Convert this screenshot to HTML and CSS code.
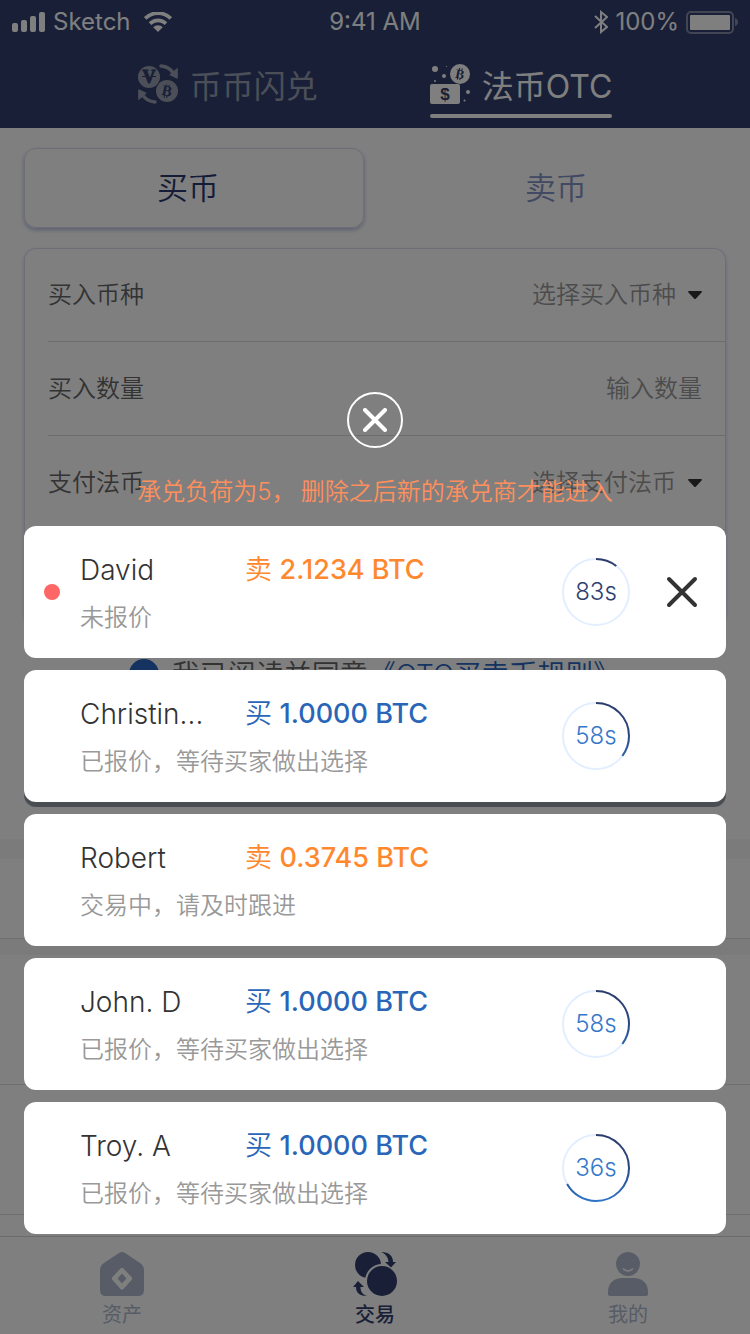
FILE: index.html
```html
<!DOCTYPE html>
<html lang="zh-CN">
<head>
<meta charset="utf-8">
<meta name="viewport" content="width=device-width, initial-scale=1">
<title>法币OTC</title>
<link rel="stylesheet" href="styles.css">
</head>
<body>
<div class="page">
  <header class="header">
    <div class="status">
      <div class="status-side">
        <svg width="34" height="20" viewBox="0 0 34 20" fill="currentColor" aria-hidden="true"><rect y="11" width="6" height="9" rx="2"/><rect x="9" y="8" width="6" height="12" rx="2"/><rect x="18" y="4" width="6" height="16" rx="2"/><rect x="27" width="6" height="20" rx="2"/></svg>
        <span>Sketch</span>
        <svg class="wifi" width="28" height="20" viewBox="0 0 28 20" aria-hidden="true"><g fill="none" stroke="currentColor" stroke-width="3.800"><path d="M1.200 6.500a18 18 0 0 1 25.600 0"/><path d="M6 11.600a11.400 11.400 0 0 1 16 0"/></g><path d="M9.200 15.200a6.600 6.600 0 0 1 9.600 0L14 20z" fill="currentColor"/></svg>
      </div>
      <span>9:41 AM</span>
      <div class="status-side status-end">
        <svg width="14" height="24" viewBox="0 0 14 24" fill="none" stroke="currentColor" stroke-width="2" aria-hidden="true"><path d="M1 6l12 11-6 5V2l6 5L1 18"/></svg>
        <span>100%</span>
        <svg width="48" height="23" viewBox="0 0 48 23" aria-hidden="true"><rect x="1" y="1" width="46" height="21" rx="4" fill="none" stroke="currentColor" stroke-width="2" opacity=".4"/><rect x="4" y="4" width="40" height="15" rx="1" fill="currentColor"/></svg>
        <svg class="nub" width="3" height="8" viewBox="0 0 3 8" aria-hidden="true"><path d="M0 0q3 1 3 4t-3 4z" fill="currentColor" opacity=".4"/></svg>
      </div>
    </div>
    <nav class="modes">
      <button class="mode" type="button">
        <svg width="40" height="40" viewBox="0 0 40 40" aria-hidden="true">
          <g fill="currentColor"><circle cx="11" cy="13" r="11"/><circle cx="29" cy="27" r="11"/></g>
          <g fill="none" stroke="currentColor" stroke-width="3.500" stroke-linecap="round"><path d="M23 2q9 .500 13.500 9"/><path d="M17 38q-9-.500-13.500-9"/></g>
          <g fill="currentColor" stroke="currentColor" stroke-linejoin="round"><path d="M39.300 4.500v9.800l-7.500-3.500z"/><path d="M.700 35.500v-9.800l7.500 3.500z"/></g>
          <g class="coin-mark"><text class="vee" x="11" y="19" font-size="18">V</text><path d="M4 12.500h5M13 12.500h5"/><g transform="rotate(12 29 27)"><text x="29" y="32" font-size="15">B</text><path d="M27.500 20.500v2.500M30 20.500v2.500M27.500 31.500v2.500M30 31.500v2.500"/></g></g>
        </svg>
        <span>币币闪兑</span>
      </button>
      <button class="mode mode-on" type="button" aria-current="page">
        <svg width="40" height="40" viewBox="0 0 40 40" aria-hidden="true">
          <g fill="currentColor"><rect y="20" width="30" height="20" rx="2"/><circle cx="30" cy="10" r="10"/><circle cx="5" cy="5" r="3"/><circle cx="14" cy="12" r="2"/><circle cx="5" cy="17" r="1"/><circle cx="16.500" cy="2.500" r=".600"/><circle cx="38" cy="28" r="2"/><circle cx="34.500" cy="36.500" r="1"/></g>
          <g class="coin-mark"><g transform="rotate(12 30 10)"><text x="30" y="14.500" font-size="13">B</text><path d="M28.500 4v2M31 4v2M28.500 14v2M31 14v2"/></g><text class="dollar" x="15" y="36" font-size="17">$</text></g>
        </svg>
        <span>法币<span class="latin">OTC</span></span>
      </button>
    </nav>
  </header>

  <main class="main">
    <form class="trade">
      <div class="sides">
        <button class="side side-on" type="button">买币</button>
        <button class="side" type="button">卖币</button>
      </div>
      <div class="fields">
        <div class="field">
          <label for="coin">买入币种</label>
          <div class="pick"><select id="coin"><option>选择买入币种</option></select><svg width="14" height="8" viewBox="0 0 14 8" aria-hidden="true"><path d="M0 1q0-1 1-1h12q1 0 1 1L8 7.500q-1 1-2 0z"/></svg></div>
        </div>
        <div class="field">
          <label for="amount">买入数量</label>
          <input id="amount" type="text" placeholder="输入数量">
        </div>
        <div class="field">
          <label for="fiat">支付法币</label>
          <div class="pick"><select id="fiat"><option>选择支付法币</option></select><svg width="14" height="8" viewBox="0 0 14 8" aria-hidden="true"><path d="M0 1q0-1 1-1h12q1 0 1 1L8 7.500q-1 1-2 0z"/></svg></div>
        </div>
        <div class="field"></div>
      </div>
      <div class="agree">
        <input class="tick" id="agree" type="checkbox" checked>
        <p><label for="agree">我已阅读并同意</label><a href="#rules">《<span class="latin">OTC</span>买卖币规则》</a></p>
      </div>
      <div class="submit"></div>
    </form>
    <div class="strip"></div>
    <div class="panel-head"></div>
    <div class="strip strip-low"></div>
    <div class="order"></div>
    <div class="order"></div>
  </main>

  <nav class="tabbar">
    <a class="tab" href="#assets">
      <svg width="44" height="44" viewBox="0 0 44 44" aria-hidden="true"><path fill="currentColor" d="M19 1q3-2 6 0l15 10q4 3 4 7v20q0 6-6 6H6q-6 0-6-6V18q0-4 4-7z"/><path fill="#fff" d="M20.500 16.500q1.500-1.500 3 0l8 8.500q1.500 1.500 0 3l-8 9q-1.500 1.500-3 0l-8-9q-1.500-1.500 0-3z"/><path fill="currentColor" d="M22 21.500l4.500 5L22 31.500l-4.500-5z"/></svg>
      <span>资产</span>
    </a>
    <a class="tab tab-on" href="#trade" aria-current="page">
      <svg width="44" height="44" viewBox="0 0 44 44" aria-hidden="true"><g fill="currentColor"><circle cx="15" cy="13" r="13"/><circle cx="29" cy="29" r="16" stroke="#fff" stroke-width="2"/><path d="M28 0c8 0 12 4 12 10h3l-5 5.500-6-5.500h3.500c-.500-5-2.500-8-7.500-10z"/><path d="M14 44C7 44 3 41 3 35H0l5-6 6 6H7.500c0 4 1.500 7.500 6.500 9z"/></g></svg>
      <span>交易</span>
    </a>
    <a class="tab" href="#me">
      <svg width="40" height="44" viewBox="0 0 40 44" aria-hidden="true"><g fill="currentColor"><circle cx="20" cy="12" r="12"/><path d="M0 42v-2c0-9 6-14 14-14h12c8 0 14 5 14 14v2q0 2-2 2H2q-2 0-2-2z"/></g><path d="M15.500 17q4.500 4 9 0" fill="none" stroke="#fff" stroke-width="1.600" stroke-linecap="round"/></svg>
      <span>我的</span>
    </a>
  </nav>

  <section class="overlay" aria-label="订单">
    <svg class="defs" width="0" height="0" aria-hidden="true"><defs><linearGradient id="arc" x1="1" y1="0" x2="0" y2="0"><stop offset="0" stop-color="#2f3d6b"/><stop offset=".5" stop-color="#2c4880"/><stop offset="1" stop-color="#2f74c8"/></linearGradient></defs></svg>
    <button class="dismiss" type="button" aria-label="关闭"><svg width="24" height="24" viewBox="0 0 24 24" fill="none" stroke="currentColor" stroke-width="4" stroke-linecap="round"><path d="M2 2l20 20M22 2L2 22"/></svg></button>
    <p class="notice">承兑负荷为<span class="latin">5</span>， 删除之后新的承兑商才能进入</p>
    <ul class="deals">
      <li class="deal">
        <span class="dot"></span>
        <h2 class="name">David</h2>
        <p class="sum sell">卖 <b>2.1234 BTC</b></p>
        <p class="note">未报价</p>
        <div class="timer timer-dark"><svg viewBox="0 0 68 68" aria-hidden="true"><circle class="track" cx="34" cy="34" r="33"/><circle class="arc" cx="34" cy="34" r="33" pathLength="360" stroke-dasharray="38 322"/></svg><span>83s</span></div>
        <button class="remove" type="button" aria-label="删除"><svg width="32" height="32" viewBox="0 0 32 32" fill="none" stroke="currentColor" stroke-width="4" stroke-linecap="round"><path d="M3 3l26 26M29 3L3 29"/></svg></button>
      </li>
      <li class="deal">
        <h2 class="name">Christin...</h2>
        <p class="sum buy">买 <b>1.0000 BTC</b></p>
        <p class="note">已报价，等待买家做出选择</p>
        <div class="timer"><svg viewBox="0 0 68 68" aria-hidden="true"><circle class="track" cx="34" cy="34" r="33"/><circle class="arc" cx="34" cy="34" r="33" pathLength="360" stroke-dasharray="127 233"/></svg><span>58s</span></div>
      </li>
      <li class="deal">
        <h2 class="name">Robert</h2>
        <p class="sum sell">卖 <b>0.3745 BTC</b></p>
        <p class="note">交易中，请及时跟进</p>
      </li>
      <li class="deal">
        <h2 class="name">John. D</h2>
        <p class="sum buy">买 <b>1.0000 BTC</b></p>
        <p class="note">已报价，等待买家做出选择</p>
        <div class="timer"><svg viewBox="0 0 68 68" aria-hidden="true"><circle class="track" cx="34" cy="34" r="33"/><circle class="arc" cx="34" cy="34" r="33" pathLength="360" stroke-dasharray="127 233"/></svg><span>58s</span></div>
      </li>
      <li class="deal">
        <h2 class="name">Troy. A</h2>
        <p class="sum buy">买 <b>1.0000 BTC</b></p>
        <p class="note">已报价，等待买家做出选择</p>
        <div class="timer"><svg viewBox="0 0 68 68" aria-hidden="true"><circle class="track" cx="34" cy="34" r="33"/><circle class="arc" cx="34" cy="34" r="33" pathLength="360" stroke-dasharray="241 119"/></svg><span>36s</span></div>
      </li>
    </ul>
  </section>
</div>
</body>
</html>
```
FILE: styles.css
```css
*, *::before, *::after { box-sizing: border-box; }
body, h2, p, ul { margin: 0; padding: 0; }
body {
  font-family: Inter, "Noto Sans CJK SC", sans-serif;
  font-size: 24px;
  line-height: 36px;
  font-weight: 350;
  color: #666;
}
button, input, select {
  font: inherit;
  color: inherit;
  background: none;
  border: 0;
  padding: 0;
  margin: 0;
}
svg { display: block; flex: none; }
a { color: inherit; text-decoration: none; }
.latin { font-family: Inter, sans-serif; line-height: 1; }

.page {
  position: relative;
  display: flex;
  flex-direction: column;
  min-height: 100vh;
  background: #fff;
}

/* Header */
.header { background: #303e6f; color: #fff; }
.status {
  display: grid;
  grid-template-columns: 1fr auto 1fr;
  align-items: center;
  height: 44px;
  padding: 0 12px;
  font-weight: 400;
}
.status-side { display: flex; align-items: center; gap: 7px; height: 40px; }
.status-end { justify-content: flex-end; }
.wifi { margin-left: 6px; }
.nub { margin-left: -6px; }
.modes { display: flex; justify-content: center; gap: 112px; padding: 20px 0 10px; }
.mode {
  position: relative;
  display: flex;
  align-items: center;
  gap: 12px;
  padding-bottom: 14px;
  font-family: "Noto Sans CJK SC", sans-serif;
  font-size: 32px;
  line-height: 40px;
  font-weight: 400;
  color: #989eb0;
}
.mode-on { color: #fff; }
.mode-on::after {
  content: "";
  position: absolute;
  left: 0;
  right: 0;
  bottom: 0;
  height: 4px;
  border-radius: 2px;
  background: currentColor;
}
.coin-mark {
  fill: #303e6f;
  stroke: #303e6f;
  stroke-width: 1;
  font-family: "Liberation Serif", serif;
  font-weight: 700;
  text-anchor: middle;
}
.coin-mark text { stroke-width: 0; }
.coin-mark .dollar { font-family: "Liberation Sans", sans-serif; }
.coin-mark .vee { stroke-width: 1; }

/* Trade form */
.main { flex: 1; }
.trade { padding: 20px 24px 32px; }
.sides { display: grid; grid-template-columns: 1fr 1fr; gap: 22px; }
.side {
  height: 80px;
  border-radius: 12px;
  font-size: 31px;
  color: #8492c4;
}
.side-on {
  padding-right: 12px;
  color: #2b3970;
  border: 1px solid #dadcf0;
  box-shadow: 0 2px 4px #b4bbdc;
}
.fields {
  margin-top: 20px;
  padding-left: 24px;
  border-radius: 12px;
  box-shadow: inset 0 0 0 1px #dadcf0, 0 2px 4px #cdd2ea;
}
.field {
  display: flex;
  align-items: center;
  justify-content: space-between;
  height: 94px;
  padding-right: 24px;
  border-bottom: 1px solid #d8d8d8;
}
.field:last-child { border-bottom: 0; }
.field input { flex: 1; min-width: 0; text-align: right; }
.field input::placeholder { color: #999; opacity: 1; }
.pick { display: flex; align-items: center; gap: 12px; color: #999; }
.pick svg { fill: #333; }
.pick select { appearance: none; }
.agree {
  display: flex;
  align-items: center;
  justify-content: center;
  gap: 13px;
  margin-top: 34px;
  font-family: "Noto Sans CJK SC", sans-serif;
  font-size: 28px;
  line-height: 30px;
}
.agree a { color: #2a66c0; }
.tick {
  appearance: none;
  display: grid;
  place-items: center;
  width: 30px;
  height: 30px;
  border-radius: 50%;
  background: #2a66c0;
}
.tick::after {
  content: "";
  width: 16px;
  height: 8px;
  border: solid #fff;
  border-width: 0 0 2px 2px;
  transform: rotate(-45deg);
}
.submit { height: 80px; margin-top: 38px; border-radius: 12px; background: #959da5; }
.strip { height: 20px; background: #f6f6f6; }
.strip-low { height: 16px; }
.panel-head { height: 80px; border-bottom: 1px solid #dcdcdc; }
.order { height: 130px; border-bottom: 1px solid #dcdcdc; }

/* Bottom bar */
.tabbar {
  display: flex;
  justify-content: space-between;
  height: 98px;
  padding: 15px 98px 0;
  border-top: 1px solid #d4d4d4;
}
.tab {
  display: flex;
  flex-direction: column;
  align-items: center;
  gap: 4px;
  width: 48px;
  font-family: "Noto Sans CJK SC", sans-serif;
  font-size: 20px;
  line-height: 28px;
  font-weight: 400;
  color: #aeb8cc;
}
.tab-on { color: #303e6f; font-weight: 500; }

/* Deals overlay */
.overlay {
  position: absolute;
  inset: 0;
  display: flex;
  flex-direction: column;
  align-items: center;
  justify-content: flex-end;
  padding: 0 24px 100px;
  background: rgba(0, 0, 0, .5);
}
.defs { position: absolute; }
.dismiss {
  display: grid;
  place-items: center;
  width: 56px;
  height: 56px;
  border: 2px solid #fff;
  border-radius: 50%;
  color: #fff;
}
.notice {
  margin: 24px 0 18px;
  font-family: "Noto Sans CJK SC", sans-serif;
  color: #ff8f5c;
}
.deals { display: grid; gap: 12px; width: 100%; list-style: none; }
.deal {
  display: grid;
  grid-template-columns: 16px 145px 1fr 68px 32px;
  grid-template-areas:
    "dot name sum timer remove"
    "dot note note timer remove";
  align-items: center;
  row-gap: 8px;
  padding: 24px 28px 24px 20px;
  border-radius: 12px;
  background: #fff;
}
.dot { grid-area: dot; width: 16px; height: 16px; border-radius: 50%; background: #f66; }
.name {
  grid-area: name;
  margin-left: 20px;
  white-space: nowrap;
  font-size: 28px;
  line-height: 40px;
  font-weight: 300;
  color: #333;
}
.sum { grid-area: sum; margin-left: 40px; font-size: 27px; line-height: 40px; white-space: nowrap; }
.sum b { font-weight: 500; }
.sell { color: #ff882e; }
.buy { color: #2a66b8; }
.note {
  grid-area: note;
  margin-left: 20px;
  font-family: "Noto Sans CJK SC", sans-serif;
  color: #999;
}
.timer {
  grid-area: timer;
  display: grid;
  place-items: center;
  width: 68px;
  height: 68px;
  margin-left: -36px;
  font-weight: 300;
  color: #3478cc;
}
.timer > * { grid-area: 1 / 1; }
.timer svg { width: 68px; height: 68px; transform: rotate(-90deg); }
.timer-dark { color: #303e6f; }
.track, .arc { fill: none; stroke-width: 2; }
.track { stroke: #e3eeff; }
.arc { stroke: url(#arc); }
.remove { grid-area: remove; color: #333; }
```
